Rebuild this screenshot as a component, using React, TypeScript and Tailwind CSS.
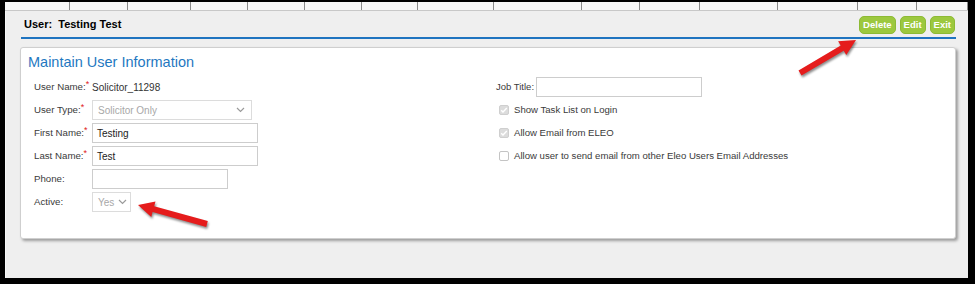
import React from 'react'

const columnWidths = [65, 58, 63, 57, 57, 57, 56, 76, 88, 58, 60, 78, 80, 59, 51]

const Req = () => <span className="text-[#e02020] align-top text-[9px] leading-none">*</span>

function Chevron() {
  return (
    <svg width="9" height="6" viewBox="0 0 9 6" className="shrink-0">
      <path d="M1 1l3.5 3.5L8 1" fill="none" stroke="#9a9a9a" strokeWidth="1.2" />
    </svg>
  )
}

function Check({ checked }: { checked: boolean }) {
  return (
    <div
      className={`w-[10px] h-[10px] rounded-[2px] border flex items-center justify-center ${
        checked ? 'bg-[#dcdcdc] border-[#cfcfcf]' : 'bg-white border-[#c4c4c4]'
      }`}
    >
      {checked && (
        <svg width="8" height="8" viewBox="0 0 8 8">
          <path d="M1.2 4.2l1.8 1.8 3.8-4" fill="none" stroke="#ffffff" strokeWidth="1.4" />
        </svg>
      )}
    </div>
  )
}

export default function App() {
  const rowLabel = 'w-[58px] shrink-0 text-[9.7px] text-[#3a3a3a]'
  const input = 'h-[20px] border border-[#cdcdcd] bg-white px-[4px] text-[10px] text-[#222] flex items-center'

  return (
    <div className="relative w-[975px] h-[284px] bg-black pl-[5px] pr-[7px] pb-[6px] flex flex-col font-['Liberation_Sans',Arial,sans-serif]">
      {/* clipped table header above */}
      <div className="h-[11px] shrink-0 flex border-b border-[#c8c8c8] bg-[#f7f7f7] border-t-2 border-t-black">
        {columnWidths.map((w, i) => (
          <div key={i} style={{ width: w }} className="h-full border-r border-[#8a8a8a] shrink-0" />
        ))}
      </div>

      <div className="flex-1 bg-[#efefef] pl-[14px] pr-[12px] flex flex-col border-l border-[#f8f8f8]">
        <div className="h-[26px] flex items-center justify-between pl-[4px] pr-[1px]">
          <div className="text-[11px] font-bold text-black whitespace-pre">User:  Testing Test</div>
          <div className="flex gap-[4px] pt-[1px]">
            {['Delete', 'Edit', 'Exit'].map((b) => (
              <button
                key={b}
                className="h-[18px] px-[3px] rounded-[5px] bg-[#9cc83e] border border-[#8dba34] text-white text-[9.5px] font-bold leading-none"
              >
                {b}
              </button>
            ))}
          </div>
        </div>
        <div className="h-[2px] bg-[#1f74c0] ml-[1px]" />

        <div className="mt-[8px] h-[192px] bg-white border border-[#cfcfcf] rounded-[3px] shadow-[2px_2px_3px_rgba(0,0,0,0.35)] pt-[5px] pl-[7px]">
          <div className="text-[14.5px] leading-[18px] text-[#1f78c1]">Maintain User Information</div>

          <div className="mt-[6px] pl-[6px] flex">
            <div className="w-[462px] flex flex-col gap-[3px]">
              <div className="h-[20px] flex items-center">
                <div className={rowLabel}>
                  User Name:<Req />
                </div>
                <div className="text-[10px] text-[#333]">Solicitor_11298</div>
              </div>
              <div className="h-[20px] flex items-center">
                <div className={rowLabel}>
                  User Type:<Req />
                </div>
                <div className="w-[160px] h-[20px] border border-[#dcdcdc] bg-white pl-[5px] pr-[6px] flex items-center justify-between">
                  <span className="text-[10px] text-[#a8a8a8]">Solicitor Only</span>
                  <Chevron />
                </div>
              </div>
              <div className="h-[20px] flex items-center">
                <div className={rowLabel}>
                  First Name:<Req />
                </div>
                <div className={`${input} w-[166px]`}>Testing</div>
              </div>
              <div className="h-[20px] flex items-center">
                <div className={rowLabel}>
                  Last Name:<Req />
                </div>
                <div className={`${input} w-[166px]`}>Test</div>
              </div>
              <div className="h-[20px] flex items-center">
                <div className={rowLabel}>Phone:</div>
                <div className={`${input} w-[136px]`} />
              </div>
              <div className="h-[20px] flex items-center">
                <div className={rowLabel}>Active:</div>
                <div className="w-[39px] h-[20px] border border-[#dcdcdc] bg-white pl-[5px] pr-[3px] flex items-center justify-between">
                  <span className="text-[10px] text-[#a8a8a8]">Yes</span>
                  <Chevron />
                </div>
              </div>
            </div>

            <div className="flex flex-col gap-[3px]">
              <div className="h-[20px] flex items-center gap-[2px]">
                <div className="text-[9.5px] text-[#3a3a3a]">Job Title:</div>
                <div className={`${input} w-[166px]`} />
              </div>
              {[
                ['Show Task List on Login', true],
                ['Allow Email from ELEO', true],
                ['Allow user to send email from other Eleo Users Email Addresses', false],
              ].map(([label, checked]) => (
                <div key={label as string} className="h-[20px] flex items-center gap-[5px] pl-[3px]">
                  <Check checked={checked as boolean} />
                  <span className="text-[9.6px] text-[#3a3a3a]">{label as string}</span>
                </div>
              ))}
            </div>
          </div>
        </div>
      </div>

      {/* annotation arrows */}
      <svg
        width="975"
        height="284"
        viewBox="0 0 975 284"
        className="absolute inset-0 pointer-events-none drop-shadow-[1px_2px_1px_rgba(0,0,0,0.45)]"
      >
        <polygon
          points="798.5,70.4 840.7,45.5 838.1,41.2 856,40 846.3,55 843.7,50.7 801.5,75.6"
          fill="#e51c1c"
        />
        <polygon
          points="207.8,221.1 154.2,206.3 155.5,201.5 138,205 151.3,216.9 152.6,212.1 206.2,226.9"
          fill="#e51c1c"
        />
      </svg>
    </div>
  )
}
